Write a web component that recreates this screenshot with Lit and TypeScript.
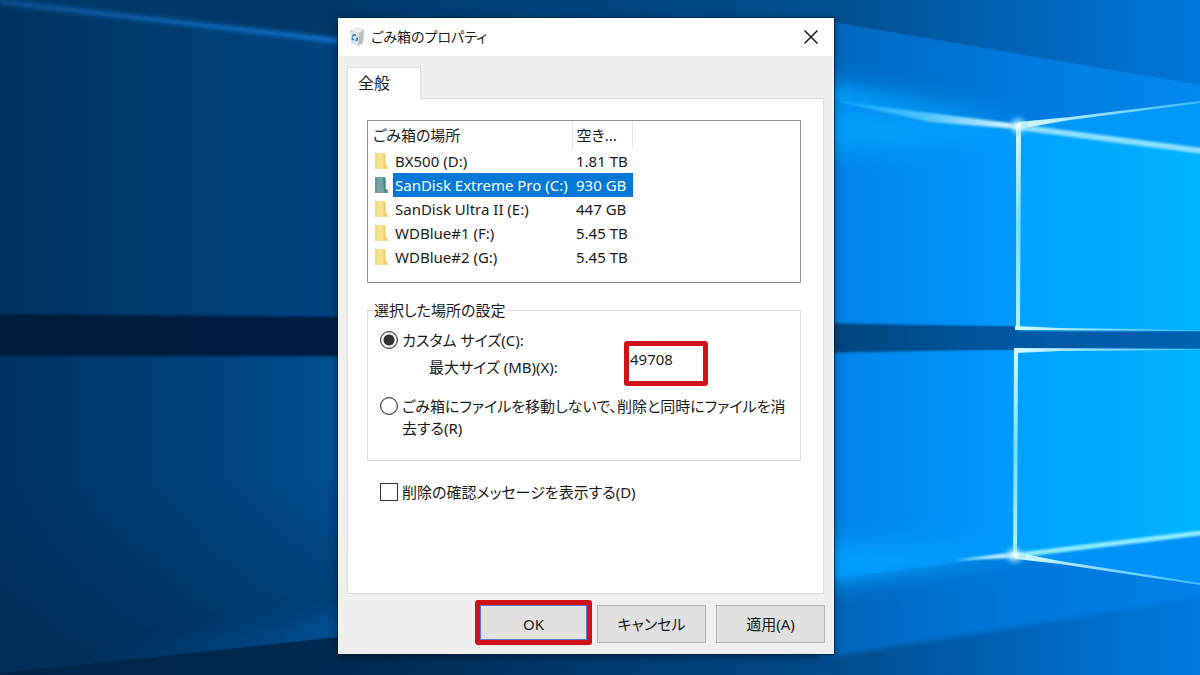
import { LitElement, html, css, svg } from "lit";
import { customElement, state } from "lit/decorators.js";
import { classMap } from "lit/directives/class-map.js";

interface Drive {
  name: string;
  free: string;
}

const drives: Drive[] = [
  { name: "BX500 (D:)", free: "1.81 TB" },
  { name: "SanDisk Extreme Pro (C:)", free: "930 GB" },
  { name: "SanDisk Ultra II (E:)", free: "447 GB" },
  { name: "WDBlue#1 (F:)", free: "5.45 TB" },
  { name: "WDBlue#2 (G:)", free: "5.45 TB" },
];

@customElement("desktop-wallpaper")
class DesktopWallpaper extends LitElement {
  static styles = css`
    :host {
      display: block;
      overflow: hidden;
    }
    svg {
      display: block;
      width: 100%;
      height: 100%;
    }
  `;

  render() {
    return html`<svg viewBox="0 0 1200 675" preserveAspectRatio="none" aria-hidden="true">
      ${svg`
      <defs>
        <linearGradient id="sky" x1="0" x2="1" y1="0" y2="0">
          <stop offset="0" stop-color="#00396a" />
          <stop offset=".28" stop-color="#00386a" />
          <stop offset=".7" stop-color="#004f90" />
          <stop offset=".85" stop-color="#0064b8" />
          <stop offset="1" stop-color="#0078dc" />
        </linearGradient>
        <linearGradient id="floor" x1="0" x2="1" y1="0" y2="0">
          <stop offset="0" stop-color="#002448" />
          <stop offset=".3" stop-color="#002a52" />
          <stop offset=".7" stop-color="#004b8c" />
          <stop offset=".85" stop-color="#0064ba" />
          <stop offset="1" stop-color="#007be0" />
        </linearGradient>
        <linearGradient id="leftTop" x1="0" x2="1" y1="0" y2="0">
          <stop offset="0" stop-color="#00335f" />
          <stop offset=".45" stop-color="#003b6e" />
          <stop offset="1" stop-color="#004381" />
        </linearGradient>
        <linearGradient id="leftLow" x1="0" x2="1" y1="0" y2="0">
          <stop offset="0" stop-color="#003364" />
          <stop offset=".5" stop-color="#003e76" />
          <stop offset="1" stop-color="#004e92" />
        </linearGradient>
        <linearGradient id="fadeDown" x1="0" x2="0" y1="0" y2="1">
          <stop offset="0" stop-color="#002a50" stop-opacity="0" />
          <stop offset="1" stop-color="#002a50" stop-opacity=".6" />
        </linearGradient>
        <linearGradient id="band" x1="0" x2="1" y1="0" y2="0">
          <stop offset="0" stop-color="#001c3a" />
          <stop offset=".28" stop-color="#001f42" />
          <stop offset=".7" stop-color="#004680" />
          <stop offset=".85" stop-color="#0059a4" />
          <stop offset="1" stop-color="#0061b2" />
        </linearGradient>
        <linearGradient id="paneNear" x1="0" x2="1" y1="0" y2="0">
          <stop offset="0" stop-color="#0080e6" />
          <stop offset="1" stop-color="#009aff" />
        </linearGradient>
        <linearGradient id="paneFar" x1="0" x2="1" y1="0" y2="0">
          <stop offset="0" stop-color="#00a2ff" />
          <stop offset="1" stop-color="#00b4ff" />
        </linearGradient>
        <linearGradient id="upperHaze" x1="0" x2="1" y1="0" y2="0">
          <stop offset="0" stop-color="#0066bd" />
          <stop offset=".5" stop-color="#007ade" />
          <stop offset="1" stop-color="#0088ee" />
        </linearGradient>
        <linearGradient id="lowerHaze" x1="0" x2="1" y1="0" y2="0">
          <stop offset="0" stop-color="#0063b8" />
          <stop offset=".5" stop-color="#0078dc" />
          <stop offset="1" stop-color="#0082e8" />
        </linearGradient>
        <linearGradient id="beamIn" x1="0" x2="1" y1="0" y2="0">
          <stop offset="0" stop-color="#12a6ff" />
          <stop offset=".5" stop-color="#4cc2ff" />
          <stop offset="1" stop-color="#e4f8ff" />
        </linearGradient>
        <linearGradient id="fadeRight" x1="0" x2="1" y1="0" y2="0">
          <stop offset="0" stop-color="#d8fbff" />
          <stop offset="1" stop-color="#38bcff" />
        </linearGradient>
        <linearGradient id="leftBeam" x1="0" x2="1" y1="0" y2="0">
          <stop offset="0" stop-color="#0a62b0" stop-opacity=".7" />
          <stop offset="1" stop-color="#0a78d8" />
        </linearGradient>
        <linearGradient id="lowBeam" x1="0" x2="1" y1="0" y2="0">
          <stop offset="0" stop-color="#0060b0" stop-opacity="0" />
          <stop offset="1" stop-color="#0060b0" stop-opacity=".9" />
        </linearGradient>
        <linearGradient id="post" x1="0" x2="0" y1="0" y2="1">
          <stop offset="0" stop-color="#d8fbff" />
          <stop offset=".5" stop-color="#74dfff" />
          <stop offset="1" stop-color="#b0f1ff" />
        </linearGradient>
        <radialGradient id="glow">
          <stop offset="0" stop-color="#fff" />
          <stop offset=".25" stop-color="#d5f6ff" stop-opacity=".8" />
          <stop offset="1" stop-color="#3dc0ff" stop-opacity="0" />
        </radialGradient>
        <clipPath id="leftLowClip"><path d="M0 356H338V637L0 673z" /></clipPath>
        <filter id="soft1" x="-10%" y="-50%" width="120%" height="200%"><feGaussianBlur stdDeviation="1" /></filter>
        <filter id="soft2" x="-10%" y="-50%" width="120%" height="200%"><feGaussianBlur stdDeviation="2" /></filter>
        <filter id="soft12" x="-20%" y="-80%" width="140%" height="260%"><feGaussianBlur stdDeviation="12" /></filter>
      </defs>

      <rect width="1200" height="675" fill="url(#sky)" />
      <rect y="500" width="1200" height="175" fill="url(#floor)" />

      <path d="M0 1 338 40V334H0z" fill="url(#leftTop)" />
      <path d="M0 340H338V637L0 673z" fill="url(#leftLow)" />
      <path d="M0 480H338V637L0 673z" fill="url(#fadeDown)" />
      <path d="M0 2 360 43" stroke="url(#leftBeam)" stroke-width="5" filter="url(#soft2)" />
      <g clip-path="url(#leftLowClip)">
        <path d="M60 668 400 600V640L60 676z" fill="url(#lowBeam)" opacity=".8" filter="url(#soft12)" />
      </g>

      <path d="M820 20 1200 85V200H820z" fill="url(#upperHaze)" />
      <path d="M820 540 1220 540V594L820 659z" fill="url(#lowerHaze)" filter="url(#soft2)" />
      <path d="M780 72 1018 122 780 112z" fill="#00a0ff" filter="url(#soft12)" />
      <path d="M1018 125 1200 101V155z" fill="#0099fa" />
      <path d="M1018 555 1200 532V584z" fill="#0092f8" />

      <path d="M820 100 1018 126V326H820z" fill="url(#paneNear)" />
      <path d="M820 350H1016V555L820 580z" fill="url(#paneNear)" />
      <path d="M780 540 1016 552 1016 556 780 592z" fill="#00a0ff" filter="url(#soft12)" />
      <path d="M780 100 1018 128 900 150 780 150z" fill="#00aaff" opacity=".7" filter="url(#soft12)" />
      <path d="M1018 126 1200 150V332H1018z" fill="url(#paneFar)" />
      <path d="M1016 348H1200V533L1016 555z" fill="url(#paneFar)" />

      <path d="M-10 314 340 317 820 323 1018 327V331H1210V349H1016L820 353 340 356-10 356z" fill="url(#band)" filter="url(#soft1)" />

      <path d="M834 101 930 113 1018 124V129L930 122z" fill="url(#beamIn)" filter="url(#soft1)" />
      <path d="M955 560 1015 552V558z" fill="#b8eaff" filter="url(#soft1)" />
      <path d="M1018 127 1210 152" stroke="#8bdfff" stroke-width="6" filter="url(#soft1)" />
      <path d="M1018 122 1070 117 1200 101 1200 103 1070 120 1018 129z" fill="url(#fadeRight)" />
      <path d="M1018 555 1210 532" stroke="#8cecff" stroke-width="5" filter="url(#soft1)" />
      <path d="M1015 552 1060 561 1200 583V585L1060 564 1015 559z" fill="url(#fadeRight)" />
      <path d="M1016 126H1021L1020 329H1016z" fill="url(#post)" />
      <path d="M1014 349H1018L1017 555H1013z" fill="url(#post)" />
      <path d="M1015 326 1060 328 1200 330V331L1015 330z" fill="url(#fadeRight)" />
      <path d="M1014 348 1200 349V350L1060 351 1014 353z" fill="url(#fadeRight)" />
      <circle cx="1018" cy="126" r="12" fill="url(#glow)" />
      <circle cx="1015" cy="555" r="12" fill="url(#glow)" />
      `}
    </svg>`;
  }
}

@customElement("app-root")
class AppRoot extends LitElement {
  static styles = css`
    :host {
      display: block;
      position: relative;
      min-height: 100vh;
      overflow: hidden;
      font: 15px/22px "Noto Sans", "Noto Sans CJK JP", sans-serif;
      font-feature-settings: "palt";
      color: #1a1a1a;
    }
    *,
    *::before,
    *::after {
      box-sizing: border-box;
    }
    button,
    input {
      font: inherit;
      font-feature-settings: inherit;
      color: inherit;
      margin: 0;
    }
    .wallpaper {
      position: absolute;
      inset: 0;
    }
    .dialog {
      position: absolute;
      left: 338px;
      top: 18px;
      width: 496px;
      display: flex;
      flex-direction: column;
      background: #f0f0f0;
      box-shadow: 0 0 0 1px rgba(0, 30, 60, 0.6), 0 2px 8px rgba(0, 0, 0, 0.5);
    }
    .titlebar {
      display: flex;
      align-items: center;
      gap: 5px;
      height: 38px;
      padding-left: 10px;
      background: #fff;
    }
    .title {
      flex: 1;
      margin: 0;
      font-size: 14px;
      font-weight: 400;
    }
    .close {
      display: grid;
      place-items: center;
      width: 46px;
      height: 38px;
      padding: 0;
      border: 0;
      background: none;
    }
    .tabs {
      display: flex;
      padding: 11px 9px 0;
    }
    .tab {
      width: 74px;
      height: 32px;
      margin-bottom: -1px;
      padding: 0 10px 2px;
      border: 1px solid #dcdcdc;
      border-bottom: 0;
      background: #fff;
      text-align: left;
      font-size: 16px;
      z-index: 1;
    }
    .page {
      display: flex;
      flex-direction: column;
      min-height: 496px;
      margin: 0 10px 0 9px;
      padding: 21px 22px 0 19px;
      border: 1px solid #dcdcdc;
      background: #fff;
    }
    .list {
      height: 163px;
      padding: 0 0 0 1px;
      border: 1px solid #8a8f98;
    }
    .drives {
      border-collapse: collapse;
      table-layout: fixed;
      width: 264px;
    }
    .drives th,
    .drives td {
      padding: 0;
      font-weight: 400;
      text-align: left;
      white-space: nowrap;
    }
    .drives th {
      height: 28px;
      padding-left: 4px;
      border-right: 1px solid #e4e4e4;
    }
    .drives td {
      height: 24px;
      line-height: 24px;
    }
    .icon-col {
      width: 24px;
    }
    .name-col {
      width: 179px;
    }
    .drives .icon-cell {
      padding-left: 5px;
    }
    .drives .name-cell {
      padding-left: 2px;
    }
    .drives .free-cell {
      padding-left: 4px;
    }
    .folder {
      display: block;
    }
    .selected .name-cell,
    .selected .free-cell {
      background: #0078d7;
      color: #fff;
    }
    .group {
      min-width: 0;
      height: 162px;
      margin: 16px 0 0;
      padding: 8px 12px 0;
      border: 1px solid #dcdcdc;
    }
    .group legend {
      margin-left: -7px;
      padding: 0 2px 0 1px;
    }
    .custom {
      display: grid;
      grid-template-columns: 1fr 159px;
      height: 66px;
    }
    .choice {
      display: flex;
      gap: 4px;
    }
    .radio,
    .check {
      appearance: none;
      flex: none;
      width: 18px;
      height: 18px;
      margin-top: 2px;
      border: 1px solid #333;
      background: #fff;
    }
    .radio {
      border-radius: 50%;
      box-shadow: inset 0 0 1px #333;
    }
    .radio:checked {
      background: radial-gradient(circle, #333 5px, #fff 6px);
    }
    .size-label {
      display: block;
      padding: 5px 0 0 49px;
    }
    .callout {
      position: relative;
      display: flex;
      align-self: start;
    }
    .callout::after {
      content: "";
      position: absolute;
      inset: -5px;
      border: 5px solid #d01317;
      border-radius: 3px;
      pointer-events: none;
    }
    .size-box {
      justify-self: start;
      margin-top: 17px;
    }
    .size {
      width: 74px;
      height: 35px;
      padding: 0 0 9px 1px;
      border: 0;
      background: #fff;
      outline: 0;
    }
    .confirm {
      margin: 20px 0 0 13px;
    }
    .actions {
      display: flex;
      justify-content: flex-end;
      gap: 10px;
      padding: 11px 9px 11px;
    }
    .action {
      width: 109px;
      height: 38px;
      padding: 0;
      border: 1px solid #b4b4b4;
      background: #e1e1e1;
    }
    .default {
      width: 107px;
      height: 35px;
      padding: 3px 0 0;
      border-color: #5a78c8;
    }
  `;

  @state() private selected = 1;
  @state() private mode = "custom";

  private folder(active: boolean) {
    const back = active ? "#4f8587" : "#f0cf6c";
    const front = active ? "#74a5a6" : "#fbe08f";
    return html`<svg class="folder" width="15" height="20" viewBox="0 0 15 20" aria-hidden="true">
      <path d="M1 2h8l3 2v10l2 1v3H1z" fill=${front} />
      <path d="M9 2l2 0v12l2 1v3l-3-1z" fill=${back} />
      <path d="M1 2h2v16H1z" fill=${back} opacity=".5" />
    </svg>`;
  }

  render() {
    return html`
      <desktop-wallpaper class="wallpaper"></desktop-wallpaper>
      <section class="dialog" role="dialog" aria-labelledby="title">
        <header class="titlebar">
          <svg width="18" height="20" viewBox="0 0 18 20" aria-hidden="true">
            <path d="M2 4 10 1l6 2-1 13-5 3-7-2z" fill="#dfe4e8" />
            <path d="m11 6 5-3-1 13-5 3z" fill="#b9bfc5" />
            <path d="m2 4 8-3 6 2-5 3z" fill="#f1f4f6" stroke="#c2c9cf" stroke-width=".6" />
            <path d="m4.500 9.500 1.500-2 1.800 1.200M9 10.500l.4 2.200-2 .8M5.800 13.200l-1.500-1 .2-1.700" fill="none" stroke="#1d7fd0" stroke-width="1.500" />
          </svg>
          <h1 class="title" id="title">ごみ箱のプロパティ</h1>
          <button class="close" aria-label="閉じる">
            <svg width="14" height="14" viewBox="0 0 14 14" fill="none" stroke="#1a1a1a" stroke-width="1.500">
              <path d="M.5.5l13 13M13.500.5l-13 13" />
            </svg>
          </button>
        </header>
        <nav class="tabs" role="tablist">
          <button class="tab" role="tab" aria-selected="true">全般</button>
        </nav>
        <div class="page" role="tabpanel">
          <div class="list">
            <table class="drives">
              <colgroup>
                <col class="icon-col" />
                <col class="name-col" />
                <col />
              </colgroup>
              <thead>
                <tr>
                  <th colspan="2">ごみ箱の場所</th>
                  <th>空き...</th>
                </tr>
              </thead>
              <tbody>
                ${drives.map(
                  (d, i) => html`<tr
                    class=${classMap({ selected: i === this.selected })}
                    @click=${() => (this.selected = i)}
                  >
                    <td class="icon-cell">${this.folder(i === this.selected)}</td>
                    <td class="name-cell">${d.name}</td>
                    <td class="free-cell">${d.free}</td>
                  </tr>`
                )}
              </tbody>
            </table>
          </div>
          <fieldset class="group">
            <legend>選択した場所の設定</legend>
            <div class="custom">
              <div>
                <div class="choice">
                  <input class="radio" type="radio" name="mode" id="custom"
                    .checked=${this.mode === "custom"} @change=${() => (this.mode = "custom")} />
                  <label for="custom">カスタム サイズ(C):</label>
                </div>
                <label class="size-label" for="size">最大サイズ (MB)(X):</label>
              </div>
              <span class="callout size-box"><input class="size" id="size" type="text" value="49708" /></span>
            </div>
            <div class="choice">
              <input class="radio" type="radio" name="mode" id="remove"
                .checked=${this.mode === "remove"} @change=${() => (this.mode = "remove")} />
              <label for="remove">ごみ箱にファイルを移動しないで、削除と同時にファイルを消去する(R)</label>
            </div>
          </fieldset>
          <div class="choice confirm">
            <input class="check" type="checkbox" id="confirm" />
            <label for="confirm">削除の確認メッセージを表示する(D)</label>
          </div>
        </div>
        <footer class="actions">
          <span class="callout"><button class="action default">OK</button></span>
          <button class="action">キャンセル</button>
          <button class="action">適用(A)</button>
        </footer>
      </section>
    `;
  }
}
